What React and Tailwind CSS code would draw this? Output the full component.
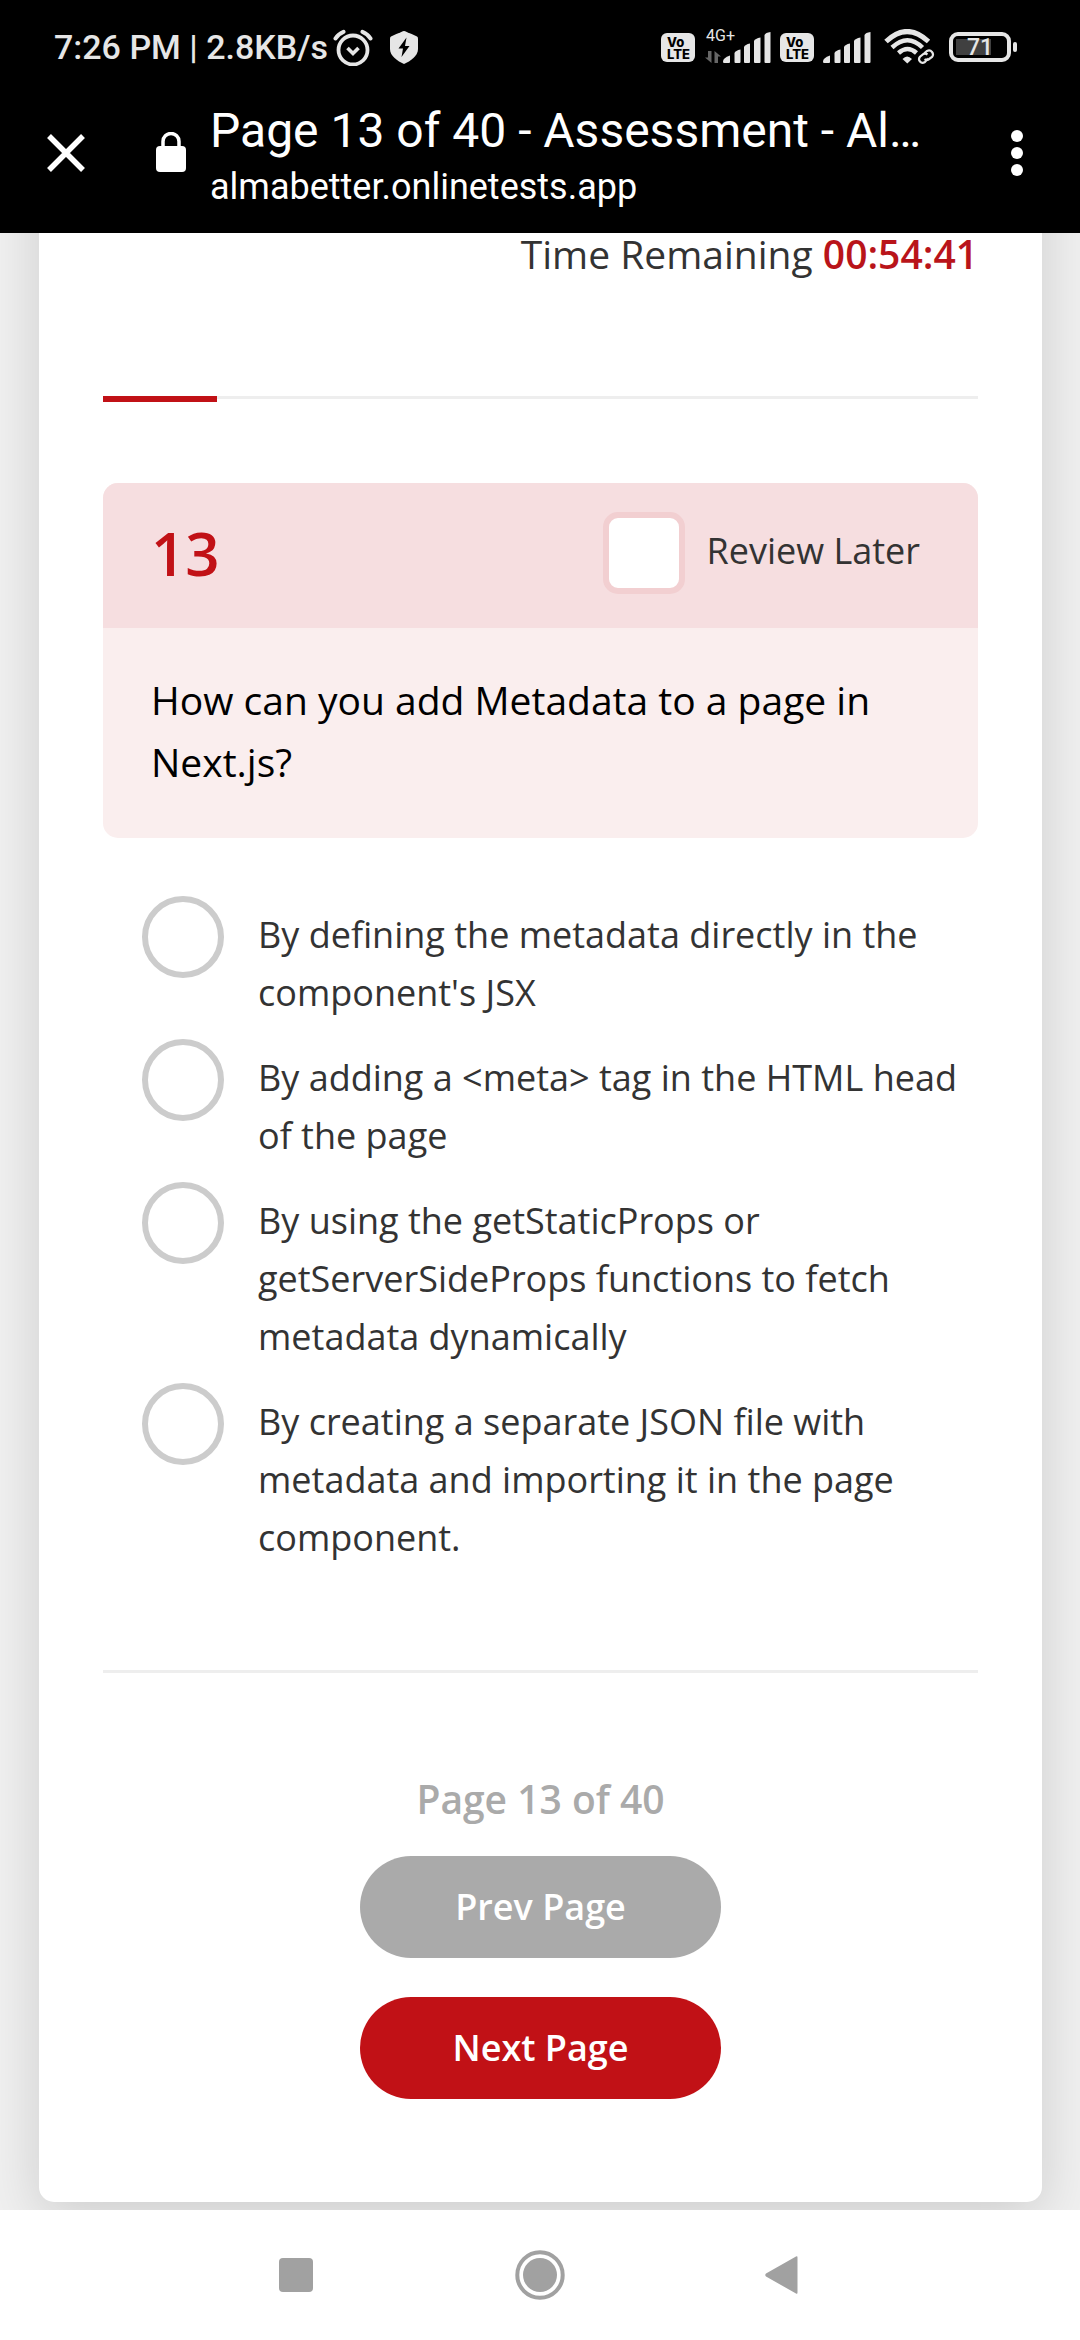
import React from "react";

const OPTIONS = [
  "By defining the metadata directly in the component's JSX",
  "By adding a <meta> tag in the HTML head of the page",
  "By using the getStaticProps or getServerSideProps functions to fetch metadata dynamically",
  "By creating a separate JSON file with metadata and importing it in the page component.",
];

function AlarmIcon() {
  return (
    <svg className="ml-[5px] h-[37px] w-[40px]" viewBox="0 0 40 37" fill="none" stroke="#e6e6e6" aria-hidden="true">
      <circle cx="20" cy="21" r="14.5" strokeWidth="3.8" />
      <path d="M14.5 19l5.5 5.5 5.5-5.5" strokeWidth="3.6" />
      <path d="M2.5 9.5Q5 5 10.5 2.8M37.5 9.5Q35 5 29.5 2.8" strokeWidth="4" strokeLinecap="round" />
    </svg>
  );
}

function ShieldIcon() {
  return (
    <svg className="ml-[17px] h-[33px] w-[28px]" viewBox="0 0 28 33" aria-hidden="true">
      <path fill="#e6e6e6" d="M14 0Q15 0 27 5.5 28 6 28 7.500V18C28 25 20.500 30 14 33 7.500 30 0 25 0 18V7.500Q0 6 1 5.500 13 0 14 0z" />
      <path fill="#000" d="M16.500 6.500L8.500 17.500H13L11.500 26 19.500 15H15z" />
    </svg>
  );
}

function VolteBadge() {
  return (
    <div className="h-[29px] w-[34px] rounded-md bg-[#e6e6e6] pl-[6px] pt-[3px] font-['Inter',sans-serif] text-[13px] font-extrabold leading-3 text-black">
      <div>Vo</div>
      <div>LTE</div>
    </div>
  );
}

function SignalBars() {
  return (
    <svg className="h-[31px] w-[48px]" viewBox="0 0 48 31" fill="#e6e6e6" aria-hidden="true">
      <path d="M0 29.500Q0 26 7 23.500V30Q7 31 6 31H1Q0 31 0 29.500z" />
      <path d="M11.500 21Q12.500 18.500 17.500 17.500V30Q17.500 31 16.500 31H12.500Q11.500 31 11.500 30z" />
      <path d="M21 15Q22 12.500 27 11.500V30Q27 31 26 31H22Q21 31 21 30z" />
      <path d="M31 9Q32 6.500 37.500 5.500V30Q37.500 31 36.500 31H32Q31 31 31 30z" />
      <path d="M41.500 3Q42.500 .5 47.500 0V30Q47.500 31 46.500 31H42.500Q41.500 31 41.500 30z" />
    </svg>
  );
}

function DataArrows() {
  return (
    <svg className="h-[12px] w-[16px]" viewBox="0 0 16 12" fill="#666" aria-hidden="true">
      <path d="M3 0h3.500v12L0 6.500h3zM9.500 12H13V5.500h3L9.500 0z" />
    </svg>
  );
}

function WifiIcon() {
  return (
    <svg className="ml-[13px] h-[36px] w-[51px]" viewBox="0 0 51 36" fill="none" stroke="#e6e6e6" aria-hidden="true">
      <path d="M2 12.500Q23 -7.500 44.500 12.500" strokeWidth="5" />
      <path d="M8 18.500Q23.500 4 38.500 18.500" strokeWidth="4.500" />
      <path d="M14.500 24Q23.500 16 32.500 24" strokeWidth="4.500" />
      <path d="M18.500 30Q23 25 28 30L23.300 34.500z" fill="#e6e6e6" stroke="none" />
      <g stroke="#000" strokeWidth="6">
        <path d="M40 24.500l3-2.500q3-1.500 5 1t0 5l-3.500 2.500q-2 1.200-4-.3M44 29.500l-3 3.500q-3 1.800-5-.5t0-4.800l3.500-2.700q2-1 4 .5" />
      </g>
      <g strokeWidth="2.200">
        <path d="M40 24.500l3-2.500q3-1.500 5 1t0 5l-3.500 2.500q-2 1.200-4-.3M44 29.500l-3 3.500q-3 1.800-5-.5t0-4.800l3.500-2.700q2-1 4 .5" />
      </g>
    </svg>
  );
}

function Battery() {
  return (
    <div className="ml-[14px] flex items-center gap-[2px]">
      <div className="flex h-[30px] w-[62px] items-center justify-center rounded-[9px] border-4 border-[#e6e6e6] bg-[linear-gradient(90deg,transparent_0_3px,#404040_3px_38px,transparent_38px)] bg-[length:100%_16px] bg-center bg-no-repeat text-[23px] font-medium leading-none text-[#e6e6e6]">
        71
      </div>
      <div className="h-[10px] w-1 rounded-full bg-[#e6e6e6]" />
    </div>
  );
}

function StatusBar() {
  return (
    <div className="flex h-[94px] items-center justify-between pl-[54px] pr-[63px]">
      <div className="flex items-center">
        <span className="whitespace-nowrap text-[34px] font-medium leading-10 text-[#e6e6e6]">7:26 PM | 2.8KB/s</span>
        <AlarmIcon />
        <ShieldIcon />
      </div>
      <div className="flex items-center">
        <VolteBadge />
        <div className="ml-[10px] flex items-end">
          <div className="relative h-[31px] w-[18px]">
            <span className="absolute -top-1 left-px text-[16px] leading-4 text-[#e6e6e6]">4G+</span>
            <div className="absolute bottom-0 left-0"><DataArrows /></div>
          </div>
          <SignalBars />
        </div>
        <div className="ml-[9px] flex items-center gap-[9px]">
          <VolteBadge />
          <SignalBars />
        </div>
        <WifiIcon />
        <Battery />
      </div>
    </div>
  );
}

function BrowserBar() {
  return (
    <div className="flex h-[139px] items-start text-white">
      <button type="button" aria-label="Close tab" className="ml-[46px] mt-[39px] h-10 w-10">
        <svg viewBox="0 0 40 40" className="h-10 w-10" stroke="#fff" strokeWidth="5.500" aria-hidden="true">
          <path d="M3 3l34 34M37 3L3 37" />
        </svg>
      </button>
      <svg viewBox="0 0 30 40" className="ml-[70px] mt-[38px] h-10 w-[30px]" aria-hidden="true">
        <rect y="14" width="30" height="26" rx="4" fill="#fff" />
        <path d="M7 15V9.500a8 8 0 0 1 16 0V15" fill="none" stroke="#fff" strokeWidth="3.500" />
      </svg>
      <div className="ml-6 min-w-0 flex-1">
        <h1 className="truncate pt-[7px] text-[48px] font-normal leading-[60px]">Page 13 of 40 - Assessment - Al…</h1>
        <p className="mt-px truncate text-[36px] leading-[50px]">almabetter.onlinetests.app</p>
      </div>
      <button type="button" aria-label="More options" className="mr-10 mt-[36px] flex h-[46px] w-[46px] flex-col items-center justify-center gap-[5px]">
        <span className="h-3 w-3 rounded-full bg-white" />
        <span className="h-3 w-3 rounded-full bg-white" />
        <span className="h-3 w-3 rounded-full bg-white" />
      </button>
    </div>
  );
}

function Question() {
  return (
    <section className="mt-[81px] overflow-hidden rounded-[15px] bg-[#faeeee]">
      <div className="flex items-center justify-between bg-[#f6dee0] pb-[34px] pl-12 pr-[58px] pt-[29px]">
        <h2 className="text-[60px] font-semibold leading-[82px] text-[#c11116]">13</h2>
        <label className="flex items-center gap-[21px]">
          <input type="checkbox" className="h-[82px] w-[82px] appearance-none rounded-[15px] border-[6px] border-[#f2cfd1] bg-white checked:bg-[#c11116]" />
          <span className="pb-1 text-[36px] leading-[58px]">Review Later</span>
        </label>
      </div>
      <p className="px-12 pb-[45px] pt-[41px] text-[39px] leading-[62px] text-black">
        How can you add Metadata to a page in Next.js?
      </p>
    </section>
  );
}

function NavBar() {
  return (
    <nav className="flex h-[130px] items-center justify-center gap-[184px] bg-white">
      <button type="button" aria-label="Recent apps" className="flex w-[60px] justify-center">
        <span className="h-[34px] w-[34px] rounded-sm bg-[#a1a1a1]" />
      </button>
      <button type="button" aria-label="Home" className="flex w-[60px] justify-center">
        <svg viewBox="0 0 50 50" className="h-[50px] w-[50px]" aria-hidden="true">
          <circle cx="25" cy="25" r="22.700" fill="none" stroke="#a1a1a1" strokeWidth="4" />
          <circle cx="25" cy="25" r="17" fill="#a1a1a1" />
        </svg>
      </button>
      <button type="button" aria-label="Back" className="flex w-[60px] justify-center">
        <svg viewBox="0 0 38 38" className="h-[38px] w-[38px]" aria-hidden="true">
          <path d="M31 .5q1.500-1 1.500 1v35q0 2-1.500 1L1 20.500q-1.500-1.500 0-3z" fill="#a1a1a1" />
        </svg>
      </button>
    </nav>
  );
}

export default function App() {
  return (
    <div className="flex min-h-screen flex-col bg-white">
      <header className="bg-black font-['Roboto',sans-serif]">
        <StatusBar />
        <BrowserBar />
      </header>
      <main className="flex-1 overflow-hidden bg-[#f0f0f0] pb-2 font-['Open_Sans',sans-serif] text-[#333]">
        <div className="ml-[39px] mr-[38px] -mt-[100px] rounded-[15px] bg-white px-16 pb-[103px] pt-[100px] shadow-[0_14px_55px_rgba(0,0,0,0.15)]">
          <p className="text-right text-[39px] leading-[42px]">
            Time Remaining <span className="font-semibold text-[#b9141a]">00:54:41</span>
          </p>
          <div className="mt-[121px] h-[6px]">
            <div className="h-[3px] bg-[#eee]">
              <div className="h-[6px] w-[13%] bg-[#c11116]" />
            </div>
          </div>
          <Question />
          <div role="radiogroup" aria-label="Answers" className="mt-[58px] flex flex-col gap-[17px] pl-[39px]">
            {OPTIONS.map((text) => (
              <label key={text} className="flex items-start gap-[34px]">
                <input type="radio" name="answer" className="h-[82px] w-[82px] shrink-0 appearance-none rounded-full border-[6px] border-[#ccc] bg-white checked:border-[#c11116]" />
                <span className="pt-[10px] text-[36px] leading-[58px]">{text}</span>
              </label>
            ))}
          </div>
          <hr className="mt-[103px] border-t-[3px] border-[#eee]" />
          <div className="mt-[100px] flex flex-col items-center font-semibold">
            <p className="text-[39px] leading-[52px] text-[#aaa]">Page 13 of 40</p>
            <button type="button" className="mt-[31px] h-[102px] w-[361px] rounded-full bg-[#aaa] text-[36px] text-white">Prev Page</button>
            <button type="button" className="mt-[39px] h-[102px] w-[361px] rounded-full bg-[#c11116] text-[36px] text-white">Next Page</button>
          </div>
        </div>
      </main>
      <NavBar />
    </div>
  );
}
